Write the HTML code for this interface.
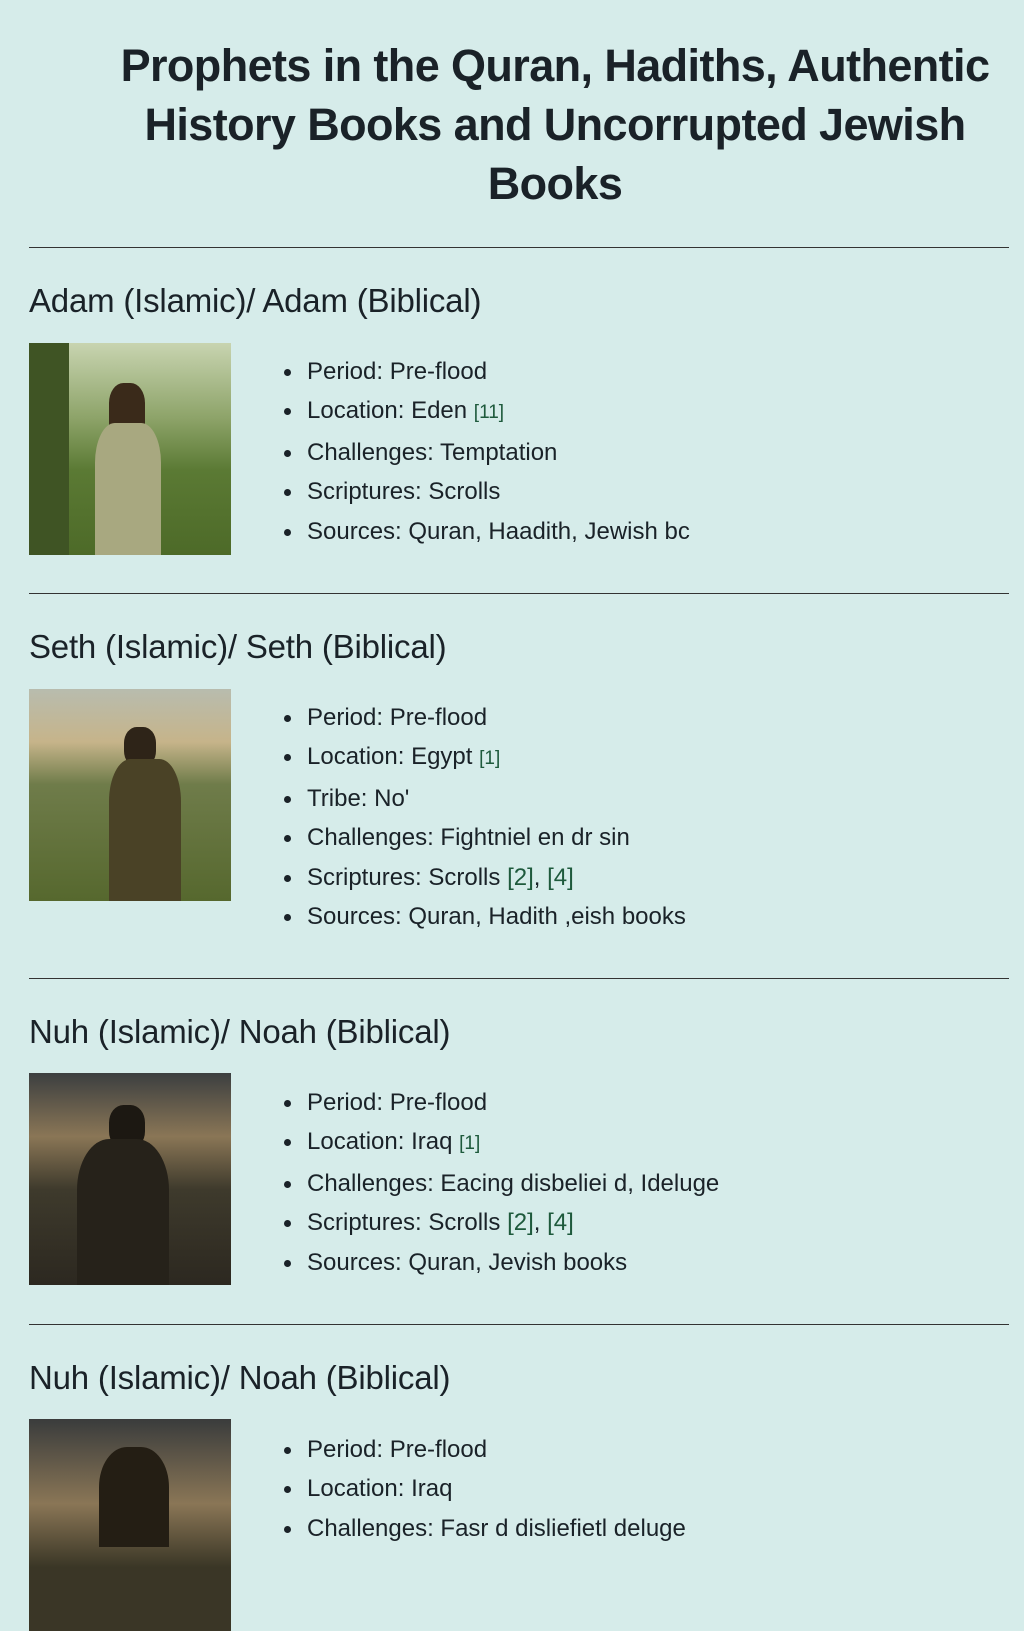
<!DOCTYPE html>
<html><head><meta charset="utf-8"><style>
body{margin:0;background:#d6ecea;font-family:"Liberation Sans",sans-serif;color:#1a2228;width:1024px;height:1536px;overflow:hidden;position:relative}
h1{position:absolute;left:60px;width:990px;top:36px;margin:0;text-align:center;font-size:45px;line-height:59px;font-weight:bold;letter-spacing:-0.6px;white-space:nowrap}
.hr{position:absolute;left:29px;width:980px;height:1px;background:#333}
h2{position:absolute;left:29px;margin:0;font-size:33px;font-weight:normal;line-height:40px;letter-spacing:-0.2px}
.img{position:absolute;left:29px;width:202px;height:212px;overflow:hidden}
ul{position:absolute;left:307px;margin:0;padding:0;list-style:none;font-size:24px;line-height:39.4px}
li{position:relative}
li:before{content:"";position:absolute;left:-23px;top:17px;width:7px;height:7px;border-radius:50%;background:#1a2228}
.r{color:#1e5a3c;font-size:19px}
</style></head><body>
<h1>Prophets in the Quran, Hadiths, Authentic<br>History Books and Uncorrupted Jewish<br>Books</h1>

<div class="hr" style="top:247px"></div>
<h2 style="top:281px">Adam (Islamic)/ Adam (Biblical)</h2>
<div class="img" style="top:343px;background:linear-gradient(180deg,#c8d4b0 0%,#8ea46a 35%,#5b7a34 60%,#4d6a28 100%)">
<div style="position:absolute;left:0;top:0;width:40px;height:212px;background:#3f5424"></div>
<div style="position:absolute;left:80px;top:40px;width:36px;height:50px;border-radius:40% 40% 20% 20%;background:#3a2a1a"></div>
<div style="position:absolute;left:66px;top:80px;width:66px;height:132px;border-radius:30% 30% 0 0;background:#a8a880"></div>
</div>
<ul style="top:352px"><li>Period: Pre-flood</li><li>Location: Eden <span class="r">[11]</span></li><li>Challenges: Temptation</li><li>Scriptures: Scrolls</li><li>Sources: Quran, Haadith, Jewish bc</li></ul>

<div class="hr" style="top:593px"></div>
<h2 style="top:627px">Seth (Islamic)/ Seth (Biblical)</h2>
<div class="img" style="top:689px;background:linear-gradient(180deg,#b8bcae 0%,#c6b48a 25%,#6f7c4a 45%,#56682e 100%)">
<div style="position:absolute;left:95px;top:38px;width:32px;height:40px;border-radius:40%;background:#2e2418"></div>
<div style="position:absolute;left:80px;top:70px;width:72px;height:142px;border-radius:30% 30% 0 0;background:#4a4226"></div>
</div>
<ul style="top:698px"><li>Period: Pre-flood</li><li>Location: Egypt <span class="r">[1]</span></li><li>Tribe: No'</li><li>Challenges: Fightniel en dr sin</li><li>Scriptures: Scrolls <span class="r" style="font-size:24px">[2]</span>, <span class="r" style="font-size:24px">[4]</span></li><li>Sources: Quran, Hadith ,eish books</li></ul>

<div class="hr" style="top:978px"></div>
<h2 style="top:1012px">Nuh (Islamic)/ Noah (Biblical)</h2>
<div class="img" style="top:1073px;background:linear-gradient(180deg,#3c3f40 0%,#8a7656 30%,#3e3a2c 55%,#2c2820 100%)">
<div style="position:absolute;left:80px;top:32px;width:36px;height:44px;border-radius:40%;background:#1c1812"></div>
<div style="position:absolute;left:48px;top:66px;width:92px;height:146px;border-radius:35% 35% 0 0;background:#26221a"></div>
</div>
<ul style="top:1083px"><li>Period: Pre-flood</li><li>Location: Iraq <span class="r">[1]</span></li><li>Challenges: Eacing disbeliei d, Ideluge</li><li>Scriptures: Scrolls <span class="r" style="font-size:24px">[2]</span>, <span class="r" style="font-size:24px">[4]</span></li><li>Sources: Quran, Jevish books</li></ul>

<div class="hr" style="top:1324px"></div>
<h2 style="top:1358px">Nuh (Islamic)/ Noah (Biblical)</h2>
<div class="img" style="top:1419px;background:linear-gradient(180deg,#3a3c3c 0%,#8a7656 40%,#3a3626 70%)">
<div style="position:absolute;left:70px;top:28px;width:70px;height:100px;border-radius:40% 40% 0 0;background:#241e14"></div>
</div>
<ul style="top:1430px"><li>Period: Pre-flood</li><li>Location: Iraq</li><li>Challenges: Fasr d disliefietl deluge</li></ul>
</body></html>
